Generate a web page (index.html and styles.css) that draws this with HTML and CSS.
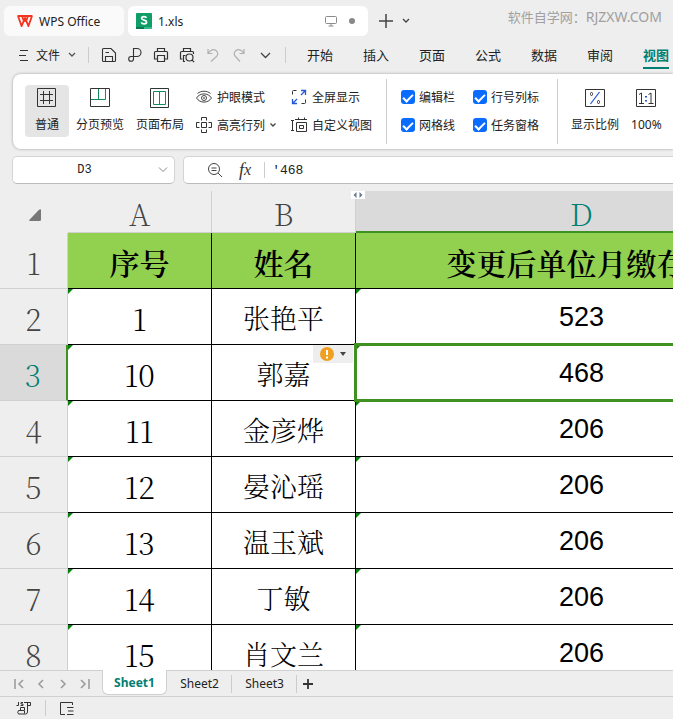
FILE: index.html
```
<!DOCTYPE html>
<html lang="zh-CN">
<head>
  <meta charset="UTF-8">
  <title>1.xls - WPS Office</title>
  <meta name="viewport" content="width=device-width, initial-scale=1">
  <link rel="stylesheet" href="styles.css">
</head>
<body>

  <header class="titlebar">
    <button class="doc-tab home">
      <svg width="16" height="12" viewBox="0 0 16 12"><path d="M0.5 1H15.5M1 1l3.6 10L8 3l3.4 8L15 1M5 1l2.200 6M11 1L8.800 7" fill="none" stroke="#f5331f" stroke-width="1.800"/></svg>
      WPS Office
    </button>
    <button class="doc-tab file">
      <svg width="16" height="16" viewBox="0 0 16 16"><rect width="16" height="16" rx="1" fill="#0f9d68"/><path d="M0 14h8v2H0z" fill="#087a4d"/><path d="M8 14h8v2H8z" fill="#37b98a"/><path d="M10.500 4.800C9.800 3.200 5.600 3 5.600 5.300c0 2.300 5 1.300 5 3.700 0 2.400-4.500 2.300-5.300.4" fill="none" stroke="#fff" stroke-width="1.700"/></svg>
      <span class="file-name">1.xls</span>
      <svg width="12" height="12" viewBox="0 0 12 12"><path d="M1.500 1.500h9q1 0 1 1v5q0 1-1 1h-9q-1 0-1-1v-5q0-1 1-1zM6 8.500v2.500M3.500 11h5" fill="none" stroke="#8a8a8a"/></svg>
      <span class="dot"></span>
    </button>
    <button class="icon-btn new-tab" aria-label="新建"><svg width="14" height="14" viewBox="0 0 14 14"><path d="M7 0v14M0 7h14" stroke="#444" stroke-width="1.500"/></svg></button>
    <button class="icon-btn tab-list" aria-label="标签列表"><svg width="8" height="6" viewBox="0 0 8 6"><path d="M1 1l3 3 3-3" fill="none" stroke="#444" stroke-width="1.300"/></svg></button>
    <span class="site">软件自学网：<span class="domain">RJZXW.COM</span></span>
  </header>

  <nav class="menubar">
    <button class="file-menu">
      <svg width="9" height="12" viewBox="0 0 9 12"><path d="M1 1.500h8M0 6.500h7M1 11.500h8" stroke="#333"/></svg>
      文件
      <svg class="caret" width="8" height="6" viewBox="0 0 8 6"><path d="M1 1l3 3 3-3" fill="none" stroke="#555" stroke-width="1.300"/></svg>
    </button>
    <span class="bar"></span>
    <div class="quick">
      <button aria-label="保存"><svg width="16" height="16" viewBox="0 0 16 16"><path d="M2.500 1.500h7.500l4.500 4.500v7.500q0 1-1 1h-11q-1 0-1-1v-11q0-1 1-1zM4.500 14.500v-5h7v5M4.500 5.500h3.500" fill="none" stroke="#333" stroke-width="1.100"/></svg></button>
      <button aria-label="输出为PDF"><svg width="16" height="16" viewBox="0 0 16 16"><path d="M6.500 5V1.500H10a3.800 3.800 0 0 1 0 8H4a2.400 2.400 0 1 0 2.500 2.500V5" fill="none" stroke="#333" stroke-width="1.100"/></svg></button>
      <button aria-label="打印"><svg width="16" height="16" viewBox="0 0 16 16"><path d="M4.500 4.500v-3h7v3M4 12H1.500V5.500q0-1 1-1h11q1 0 1 1V12H12M4.500 8.500h7v6h-7z" fill="none" stroke="#333" stroke-width="1.200"/></svg></button>
      <button aria-label="打印预览"><svg width="16" height="16" viewBox="0 0 16 16"><path d="M4.500 4.500v-3h7v3M3.500 12H1.500V5.500q0-1 1-1h11q1 0 1 1V7M6 14.500H4.500v-6h2M12.800 12.800l2.400 2.400" fill="none" stroke="#333" stroke-width="1.200"/><circle cx="10.500" cy="10.500" r="3.500" fill="none" stroke="#333" stroke-width="1.200"/></svg></button>
      <button aria-label="撤销"><svg width="16" height="16" viewBox="0 0 16 16"><path d="M3 2v4.500h4.500M3.300 6C6 2.500 9 2 11 3.500c2.500 2 2 4.500.5 6L6 14.500" fill="none" stroke="#b0b0b0" stroke-width="1.200"/></svg></button>
      <button aria-label="恢复"><svg width="16" height="16" viewBox="0 0 16 16"><path d="M13 2v4.500H8.500M12.700 6C10 2.500 7 2 5 3.500c-2.500 2-2 4.500-.5 6L9 14.500" fill="none" stroke="#b0b0b0" stroke-width="1.200"/></svg></button>
      <button aria-label="更多"><svg width="16" height="16" viewBox="0 0 16 16"><path d="M4 6l4.500 4.500L13 6" fill="none" stroke="#444" stroke-width="1.300"/></svg></button>
    </div>
    <span class="bar"></span>
    <div class="menus">
      <a href="#">开始</a>
      <a href="#">插入</a>
      <a href="#">页面</a>
      <a href="#">公式</a>
      <a href="#">数据</a>
      <a href="#">审阅</a>
      <a href="#" class="active">视图</a>
    </div>
  </nav>

  <section class="ribbon">
    <button class="big active">
      <svg width="20" height="20" viewBox="0 0 20 20" fill="none" stroke="#333"><path d="M.5 .5h18v18H.5z"/><path d="M6.500 3v13M12.500 3v13M3 6.500h13M3 12.500h13"/></svg>
      普通
    </button>
    <button class="big">
      <svg width="20" height="20" viewBox="0 0 20 20" fill="none"><path d="M.5 .5h19v18H.5z" stroke="#333"/><path d="M1 11.500h14.500V1M8.500 1v10.500" stroke="#138a5c"/></svg>
      分页预览
    </button>
    <button class="big">
      <svg width="20" height="20" viewBox="0 0 20 20" fill="none"><path d="M.5 .5h18v19H.5z" stroke="#333"/><path d="M3.500 3.500h12v13h-12zM9.500 3.500v13" stroke="#138a5c"/></svg>
      页面布局
    </button>
    <div class="stack">
      <button class="small"><svg width="16" height="14" viewBox="0 0 16 14" fill="none" stroke="#444"><path d="M.5 8C4 2.500 12 2.500 15.500 8 12 13.500 4 13.500 .5 8zM1.500 3.500C5 .500 11 .500 14.500 3.500"/><circle cx="8" cy="8" r="2.500"/><circle cx="8" cy="8" r=".5"/></svg>护眼模式</button>
      <button class="small"><svg width="16" height="16" viewBox="0 0 16 16" fill="none" stroke="#333"><path d="M5.500 5.500h5v5h-5zM5.500 3.500v-3h5v3M5.500 12.500v3h5v-3M3.500 5.500h-3v5h3M12.500 5.500h3v5h-3"/></svg>高亮行列<svg class="mini" width="6" height="4" viewBox="0 0 6 4"><path d="M.5 .5l2.500 2.500L5.500 .5" fill="none" stroke="#444" stroke-width="1.300"/></svg></button>
    </div>
    <div class="stack views">
      <button class="small"><svg width="16" height="16" viewBox="0 0 16 16" fill="none"><path d="M1.500 5.500v-3q0-1 1-1H5.500M14.500 10.500v3q0 1-1 1H10.500" stroke="#333"/><path d="M10 1.500h4.500V6M14.500 1.500l-4.500 4.500M6 14.500H1.500V10M1.500 14.500L6 10" stroke="#2457d6" stroke-width="1.300"/></svg>全屏显示</button>
      <button class="small"><svg width="16" height="16" viewBox="0 0 16 16" fill="none" stroke="#333"><path d="M0 3.500h3M1.500 3.500v10M0 13.500h3M5.500 5.500h10v9h-10zM4 2.500h12M7.500 .5v2M13.500 .5v2M8.500 8.500h4v3h-4z"/></svg>自定义视图</button>
    </div>
    <span class="divider"></span>
    <div class="checks">
      <label><input type="checkbox" checked>编辑栏</label>
      <label><input type="checkbox" checked>行号列标</label>
      <label><input type="checkbox" checked>网格线</label>
      <label><input type="checkbox" checked>任务窗格</label>
    </div>
    <span class="divider"></span>
    <button class="big">
      <svg width="20" height="20" viewBox="0 0 20 20" fill="none"><path d="M.5 1.500h19v17H.5z" stroke="#333"/><path d="M14.500 4L5.500 16" stroke="#2457d6" stroke-width="1.200"/><rect x="5.500" y="4.500" width="2" height="3" rx="1" stroke="#333"/><rect x="12.500" y="12.500" width="2" height="3" rx="1" stroke="#333"/></svg>
      显示比例
    </button>
    <button class="big zoom">
      <svg width="20" height="20" viewBox="0 0 20 20" fill="none"><path d="M.5 1.500h19v17H.5z" stroke="#333"/><path d="M3 6.500l2.500-1.500v10M3 15.500h5M12.500 6.500L15 5v10M12.500 15.500h5" stroke="#333"/><path d="M9 8h2v1.500H9zM9 12h2v1.500H9z" fill="#2457d6"/></svg>
      100%
    </button>
  </section>

  <section class="formula-row">
    <div class="name-box">
      <input type="text" value="D3" aria-label="名称框">
      <button aria-label="展开"><svg width="10" height="6" viewBox="0 0 10 6"><path d="M1 .5l4 4 4-4" fill="none" stroke="#888"/></svg></button>
    </div>
    <div class="formula-box">
      <button aria-label="缩小"><svg width="16" height="16" viewBox="0 0 16 16" fill="none" stroke="#444"><circle cx="7" cy="7" r="5.500"/><path d="M4.500 6h5M4.500 8.500h5M11 11l4 4"/></svg></button>
      <button class="fx">f<small>x</small></button>
      <span class="bar"></span>
      <input type="text" value="'468" aria-label="编辑栏">
    </div>
  </section>

  <main class="sheet">
    <table>
      <colgroup>
        <col class="col-num"><col class="col-ab"><col class="col-ab"><col class="col-d">
      </colgroup>
      <thead>
        <tr>
          <th class="corner"><svg width="12" height="12" viewBox="0 0 12 12"><path d="M12 1v9.500q0 1.500-1.500 1.500H1Q-.5 12 .5 10.800L10 .8Q12-.5 12 1z" fill="#777"/></svg></th>
          <th>A</th>
          <th>B</th>
          <th class="selected">D<span class="hidden-mark">
            <svg width="10" height="6" viewBox="0 0 10 6"><path d="M3.500 0v6L.5 3zM6.500 0v6l3-3z" fill="#6b7891"/></svg>
          </span></th>
        </tr>
      </thead>
      <tbody>
        <tr class="title"><th>1</th><td>序号</td><td>姓名</td><td>变更后单位月缴存额</td></tr>
        <tr><th>2</th><td class="mark">1</td><td>张艳平</td><td class="num mark">523</td></tr>
        <tr class="current">
          <th>3</th>
          <td class="mark">10</td>
          <td>郭嘉<button class="warn" aria-label="错误检查">
            <svg width="14" height="14" viewBox="0 0 14 14"><circle cx="7" cy="7" r="7" fill="#f0a020"/><path d="M7 3v5M7 9.500v2" stroke="#fff" stroke-width="2"/></svg>
            <svg width="6" height="4" viewBox="0 0 6 4"><path d="M0 0h6L3 4z" fill="#444"/></svg>
          </button></td>
          <td class="num mark"><span class="cursor"></span>468</td>
        </tr>
        <tr><th>4</th><td class="mark">11</td><td>金彦烨</td><td class="num mark">206</td></tr>
        <tr><th>5</th><td class="mark">12</td><td>晏沁瑶</td><td class="num mark">206</td></tr>
        <tr><th>6</th><td class="mark">13</td><td>温玉斌</td><td class="num mark">206</td></tr>
        <tr><th>7</th><td class="mark">14</td><td>丁敏</td><td class="num mark">206</td></tr>
        <tr><th>8</th><td class="mark">15</td><td>肖文兰</td><td class="num mark">206</td></tr>
      </tbody>
    </table>
  </main>

  <nav class="sheet-tabs">
    <div class="arrows">
      <button aria-label="第一个"><svg width="10" height="10" viewBox="0 0 10 10"><path d="M1 0v10M9 1L5 5l4 4" fill="none" stroke="#999" stroke-width="1.500"/></svg></button>
      <button aria-label="上一个"><svg width="10" height="10" viewBox="0 0 10 10"><path d="M7 1L3 5l4 4" fill="none" stroke="#999" stroke-width="1.500"/></svg></button>
      <button aria-label="下一个"><svg width="10" height="10" viewBox="0 0 10 10"><path d="M3 1l4 4-4 4" fill="none" stroke="#999" stroke-width="1.500"/></svg></button>
      <button aria-label="最后一个"><svg width="10" height="10" viewBox="0 0 10 10"><path d="M9 0v10M1 1l4 4-4 4" fill="none" stroke="#999" stroke-width="1.500"/></svg></button>
    </div>
    <button class="tab active">Sheet1</button>
    <button class="tab">Sheet2</button>
    <button class="tab">Sheet3</button>
    <button class="add" aria-label="新建工作表"><svg width="10" height="10" viewBox="0 0 10 10"><path d="M5 0v10M0 5h10" stroke="#333" stroke-width="1.800"/></svg></button>
  </nav>

  <footer class="statusbar">
    <button aria-label="JS宏"><svg width="15" height="14" viewBox="0 0 15 14" fill="none" stroke="#333"><path d="M2.500 1v3.500H.5M7 1.500H5v1.500h2v1.500H4.500M8 1.500h6.500v3H12M11.500 1.500v9.500q0 2-2 2h-7q-1.500-1.500 0-3.500h6v3M4.500 9V6.500h4V9"/></svg></button>
    <span class="bar"></span>
    <button aria-label="目录"><svg width="14" height="13" viewBox="0 0 14 13" fill="none" stroke="#333"><path d="M12.500 3V.5H.5v12H5M7 5.500h6.500M8 9h5.500M7 12.500h6.500"/></svg></button>
  </footer>

</body>
</html>
```
FILE: styles.css
```
* {
  box-sizing: border-box;
}
body {
  margin: 0;
  height: 100vh;
  display: flex;
  flex-direction: column;
  overflow: hidden;
  background: #eeeeee;
  color: #222;
  font-family: "Noto Sans", "Noto Sans CJK SC", sans-serif;
  font-size: 12px;
}
button, input {
  font: inherit;
  color: inherit;
  border: none;
  background: none;
  padding: 0;
  margin: 0;
}
button {
  display: flex;
  align-items: center;
  white-space: nowrap;
  flex-shrink: 0;
}
svg {
  flex-shrink: 0;
}
a {
  color: inherit;
  text-decoration: none;
}
.bar {
  width: 1px;
  height: 16px;
  background: #ccc;
  flex-shrink: 0;
}

/* title bar */
.titlebar {
  display: flex;
  align-items: center;
  padding: 6px 11px 4px 4px;
  flex-shrink: 0;
}
.doc-tab {
  height: 30px;
  border-radius: 6px;
  background: #fff;
}
.home {
  width: 120px;
  padding-left: 13px;
  gap: 6px;
  margin-right: 4px;
  background: #fafafa;
}
.file {
  width: 240px;
  padding: 0 13px 0 8px;
  gap: 6px;
  text-align: left;
}
.file-name {
  flex: 1;
}
.dot {
  width: 6px;
  height: 6px;
  margin-left: 6px;
  border-radius: 50%;
  background: #888;
}
.new-tab {
  margin-left: 11px;
}
.tab-list {
  margin-left: 9px;
}
.site {
  margin-left: auto;
  align-self: flex-start;
  color: #a0a0a0;
  font-size: 13px;
  line-height: 22px;
}
.domain {
  font-size: 14px;
}

/* menu bar */
.menubar {
  display: flex;
  align-items: center;
  height: 30px;
  padding-left: 19px;
  flex-shrink: 0;
}
.file-menu {
  gap: 8px;
  margin-right: 12px;
}
.quick {
  display: flex;
  gap: 10px;
  margin: 0 12px;
}
.menus {
  display: flex;
  gap: 30px;
  margin-left: 21px;
  font-size: 13px;
  white-space: nowrap;
}
.menus a {
  padding-top: 2px;
  line-height: 24px;
  border-bottom: 2px solid transparent;
}
.menus .active {
  color: #008073;
  font-weight: bold;
  border-color: #008073;
}

/* ribbon */
.ribbon {
  display: flex;
  margin: 4px 0 0 13px;
  height: 75px;
  padding-left: 12px;
  flex-shrink: 0;
  background: #fff;
  border-radius: 8px 0 0 8px;
  box-shadow: 0 0 3px rgba(0,0,0,0.35);
}
.big {
  flex-direction: column;
  gap: 8px;
  min-width: 44px;
  height: 52px;
  margin-top: 11px;
  margin-right: 12px;
  padding-top: 3px;
  border-radius: 4px;
  line-height: 18px;
}
.big.active {
  background: #e5e5e5;
  margin-right: 7px;
}
.big.zoom {
  min-width: 0;
}
.stack {
  display: flex;
  flex-direction: column;
  gap: 8px;
  padding-top: 13px;
  margin-right: 15px;
}
.small {
  height: 20px;
  gap: 5px;
}
.mini {
  margin-left: 0;
}
.divider {
  width: 1px;
  margin: 5px 14px;
  background: #ccc;
  flex-shrink: 0;
}
.views {
  margin-right: 0;
}
.checks {
  display: grid;
  grid-template-columns: auto auto;
  gap: 8px 18px;
  align-content: start;
  padding-top: 13px;
  white-space: nowrap;
}
.checks + .divider {
  margin-left: 18px;
  margin-right: 13px;
}
.checks label {
  display: flex;
  align-items: center;
  gap: 4px;
  height: 20px;
}
.checks input {
  appearance: none;
  width: 14px;
  height: 14px;
  border-radius: 3px;
  background: #0a6cff;
  display: flex;
  justify-content: center;
}
.checks input::after {
  content: "";
  width: 4px;
  height: 8px;
  margin-top: 2px;
  border: solid #fff;
  border-width: 0 2px 2px 0;
  transform: rotate(45deg);
}

/* name box and formula bar */
.formula-row {
  display: flex;
  gap: 8px;
  padding: 7px 0 7px 12px;
  flex-shrink: 0;
  font-family: "Liberation Mono", monospace;
}
.name-box, .formula-box {
  display: flex;
  align-items: center;
  height: 28px;
  background: #fff;
  border: 1px solid #d4d4d4;
  border-bottom-color: #bbb;
  border-radius: 5px;
}
.name-box {
  width: 163px;
  padding: 0 6px;
}
.name-box input {
  flex: 1;
  min-width: 0;
  padding-right: 8px;
  text-align: center;
}
.formula-box {
  flex: 1;
  border-right: none;
  border-radius: 5px 0 0 5px;
  padding-left: 23px;
}
.fx {
  margin: 0 13px 0 16px;
  font-family: "Liberation Serif", serif;
  font-size: 18px;
  font-style: italic;
  color: #333;
}
.fx small {
  font-size: 16px;
}
.formula-box input {
  flex: 1;
  min-width: 0;
  padding-left: 7px;
  font-size: 13px;
}

/* grid */
.sheet {
  flex: 1;
  min-height: 0;
  overflow: hidden;
  font-family: "Noto Serif CJK SC", "Noto Sans CJK SC", serif;
}
table {
  table-layout: fixed;
  width: 808px;
  border-collapse: separate;
  border-spacing: 0;
}
.col-num {
  width: 68px;
}
.col-ab {
  width: 144px;
}
th, td {
  position: relative;
  height: 56px;
  padding: 3px 0 0;
  line-height: 40px;
  text-align: center;
  white-space: nowrap;
}
th {
  font-size: 30px;
  font-weight: 200;
  color: #444;
  background: #eee;
  border-right: 1px solid #d0d0d0;
  border-bottom: 1px solid #d0d0d0;
}
thead th {
  height: 42px;
  line-height: 36px;
}
thead .corner {
  padding: 0 0 0 3px;
  border-color: #eee;
  line-height: 12px;
}
td {
  font-size: 27px;
  font-weight: 300;
  color: #000;
  background: #fff;
  border-right: 1px solid #000;
  border-bottom: 1px solid #000;
}
td:nth-child(2) {
  font-size: 30px;
}
td.num {
  padding-top: 0;
  font-family: "Liberation Sans", Arial, sans-serif;
  font-weight: normal;
}
.title td {
  background: #92d050;
  font-size: 30px;
  font-weight: 600;
}
thead .selected {
  background: #dadada;
  color: #008073;
  border-bottom: 2px solid #3f9220;
}
.current th {
  background: #dadada;
  color: #008073;
  border-right: 2px solid #3f9220;
}
.mark::before {
  content: "";
  position: absolute;
  top: 0;
  left: 0;
  border-top: 5px solid #0a800a;
  border-right: 5px solid transparent;
}
.current td:last-child {
  z-index: 1;
}
.cursor {
  position: absolute;
  inset: -2px;
  border: 3px solid #3f9220;
}
.warn {
  position: absolute;
  top: 0;
  right: 2px;
  width: 40px;
  height: 18px;
  gap: 6px;
  padding-left: 7px;
  background: #eee;
}
.hidden-mark {
  position: absolute;
  top: 0;
  left: -5px;
  width: 14px;
  height: 8px;
  background: #fff;
  display: flex;
  align-items: center;
  justify-content: center;
}

/* sheet tabs */
.sheet-tabs {
  display: flex;
  height: 26px;
  padding-left: 14px;
  border-top: 1px solid #d0d0d0;
  flex-shrink: 0;
}
.arrows {
  display: flex;
  gap: 12px;
  padding-right: 12px;
}
.tab {
  width: 65px;
  justify-content: center;
}
.tab.active {
  height: 25px;
  margin-top: -1px;
  background: #fff;
  color: #008073;
  font-weight: bold;
  border: 1px solid #d0d0d0;
  border-top: none;
  border-radius: 0 0 6px 6px;
}
.tab:not(.active) {
  background: linear-gradient(#ccc, #ccc) right center / 1px 18px no-repeat;
}
.add {
  padding: 0 6px;
}

.statusbar {
  display: flex;
  align-items: center;
  gap: 14px;
  height: 23px;
  padding-left: 16px;
  border-top: 1px solid #d0d0d0;
  flex-shrink: 0;
}
```
